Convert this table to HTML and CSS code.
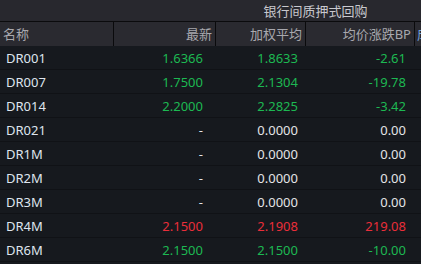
FILE: index.html
```html
<!DOCTYPE html>
<html lang="zh">
<head>
<meta charset="utf-8">
<link rel="stylesheet" href="styles.css">
</head>
<body>
<div class="table">
  <div class="group-row">
    <div class="group-spacer"></div>
    <div class="group-title">银行间质押式回购</div>
  </div>
  <div class="head-row">
    <div class="hc c1">名称</div>
    <div class="hc c2">最新</div>
    <div class="hc c3">加权平均</div>
    <div class="hc c4">均价涨跌BP</div>
    <div class="hc c5">成</div>
  </div>
  <div class="row"><div class="c1 name">DR001</div><div class="c2 up">1.6366</div><div class="c3 up">1.8633</div><div class="c4 up">-2.61</div><div class="c5"></div></div>
  <div class="row"><div class="c1 name">DR007</div><div class="c2 up">1.7500</div><div class="c3 up">2.1304</div><div class="c4 up">-19.78</div><div class="c5"></div></div>
  <div class="row"><div class="c1 name">DR014</div><div class="c2 up">2.2000</div><div class="c3 up">2.2825</div><div class="c4 up">-3.42</div><div class="c5"></div></div>
  <div class="row"><div class="c1 name">DR021</div><div class="c2 flat">-</div><div class="c3 flat">0.0000</div><div class="c4 flat">0.00</div><div class="c5"></div></div>
  <div class="row"><div class="c1 name">DR1M</div><div class="c2 flat">-</div><div class="c3 flat">0.0000</div><div class="c4 flat">0.00</div><div class="c5"></div></div>
  <div class="row"><div class="c1 name">DR2M</div><div class="c2 flat">-</div><div class="c3 flat">0.0000</div><div class="c4 flat">0.00</div><div class="c5"></div></div>
  <div class="row"><div class="c1 name">DR3M</div><div class="c2 flat">-</div><div class="c3 flat">0.0000</div><div class="c4 flat">0.00</div><div class="c5"></div></div>
  <div class="row"><div class="c1 name">DR4M</div><div class="c2 down">2.1500</div><div class="c3 down">2.1908</div><div class="c4 down">219.08</div><div class="c5"></div></div>
  <div class="row"><div class="c1 name">DR6M</div><div class="c2 up">2.1500</div><div class="c3 up">2.1500</div><div class="c4 up">-10.00</div><div class="c5"></div></div>
</div>
</body>
</html>
```
FILE: styles.css
```css
html, body {
  margin: 0;
  padding: 0;
  background: #16191e;
}
body {
  width: 421px;
  height: 264px;
  overflow: hidden;
  font-family: "Noto Sans", "Noto Sans CJK SC", sans-serif;
  font-size: 13px;
}
.table {
  display: flex;
  flex-direction: column;
}
.group-row {
  display: grid;
  grid-template-columns: 216px 199px 1fr;
  height: 22px;
  box-sizing: border-box;
  background: #28282e;
  border-bottom: 1px solid #0b0b0d;
}
.group-title {
  color: #c9c9ce;
  text-align: center;
  padding-top: 1px;
  line-height: 20px;
  white-space: nowrap;
}
.head-row, .row {
  display: grid;
  grid-template-columns: 114px 102px 90px 109px 1fr;
}
.head-row {
  height: 24px;
  background: #2a2a30;
}
.hc {
  box-sizing: border-box;
  border-right: 1px solid #0a0a0c;
  color: #a8a8ae;
  padding-top: 1px;
  line-height: 23px;
  text-align: right;
  padding-right: 3px;
  white-space: nowrap;
  overflow: hidden;
}
.hc.c1 {
  text-align: left;
  padding-left: 3px;
}
.hc.c5 {
  border-right: none;
  text-align: left;
  padding-left: 2px;
  color: #6f9fd6;
}
.row {
  height: 24px;
  box-sizing: border-box;
  border-bottom: 1px solid #101216;
}
.row > div {
  text-align: right;
  white-space: nowrap;
  padding-top: 2px;
  line-height: 21px;
}
.row .name {
  text-align: left;
  padding-left: 6px;
  color: #dfe5ee;
}
.row .c2 { padding-right: 13px; }
.row .c3 { padding-right: 8px; }
.row .c4 { padding-right: 9px; }
.up { color: #1db852; }
.down { color: #ea2e3a; }
.flat { color: #e4e4e6; }
```
